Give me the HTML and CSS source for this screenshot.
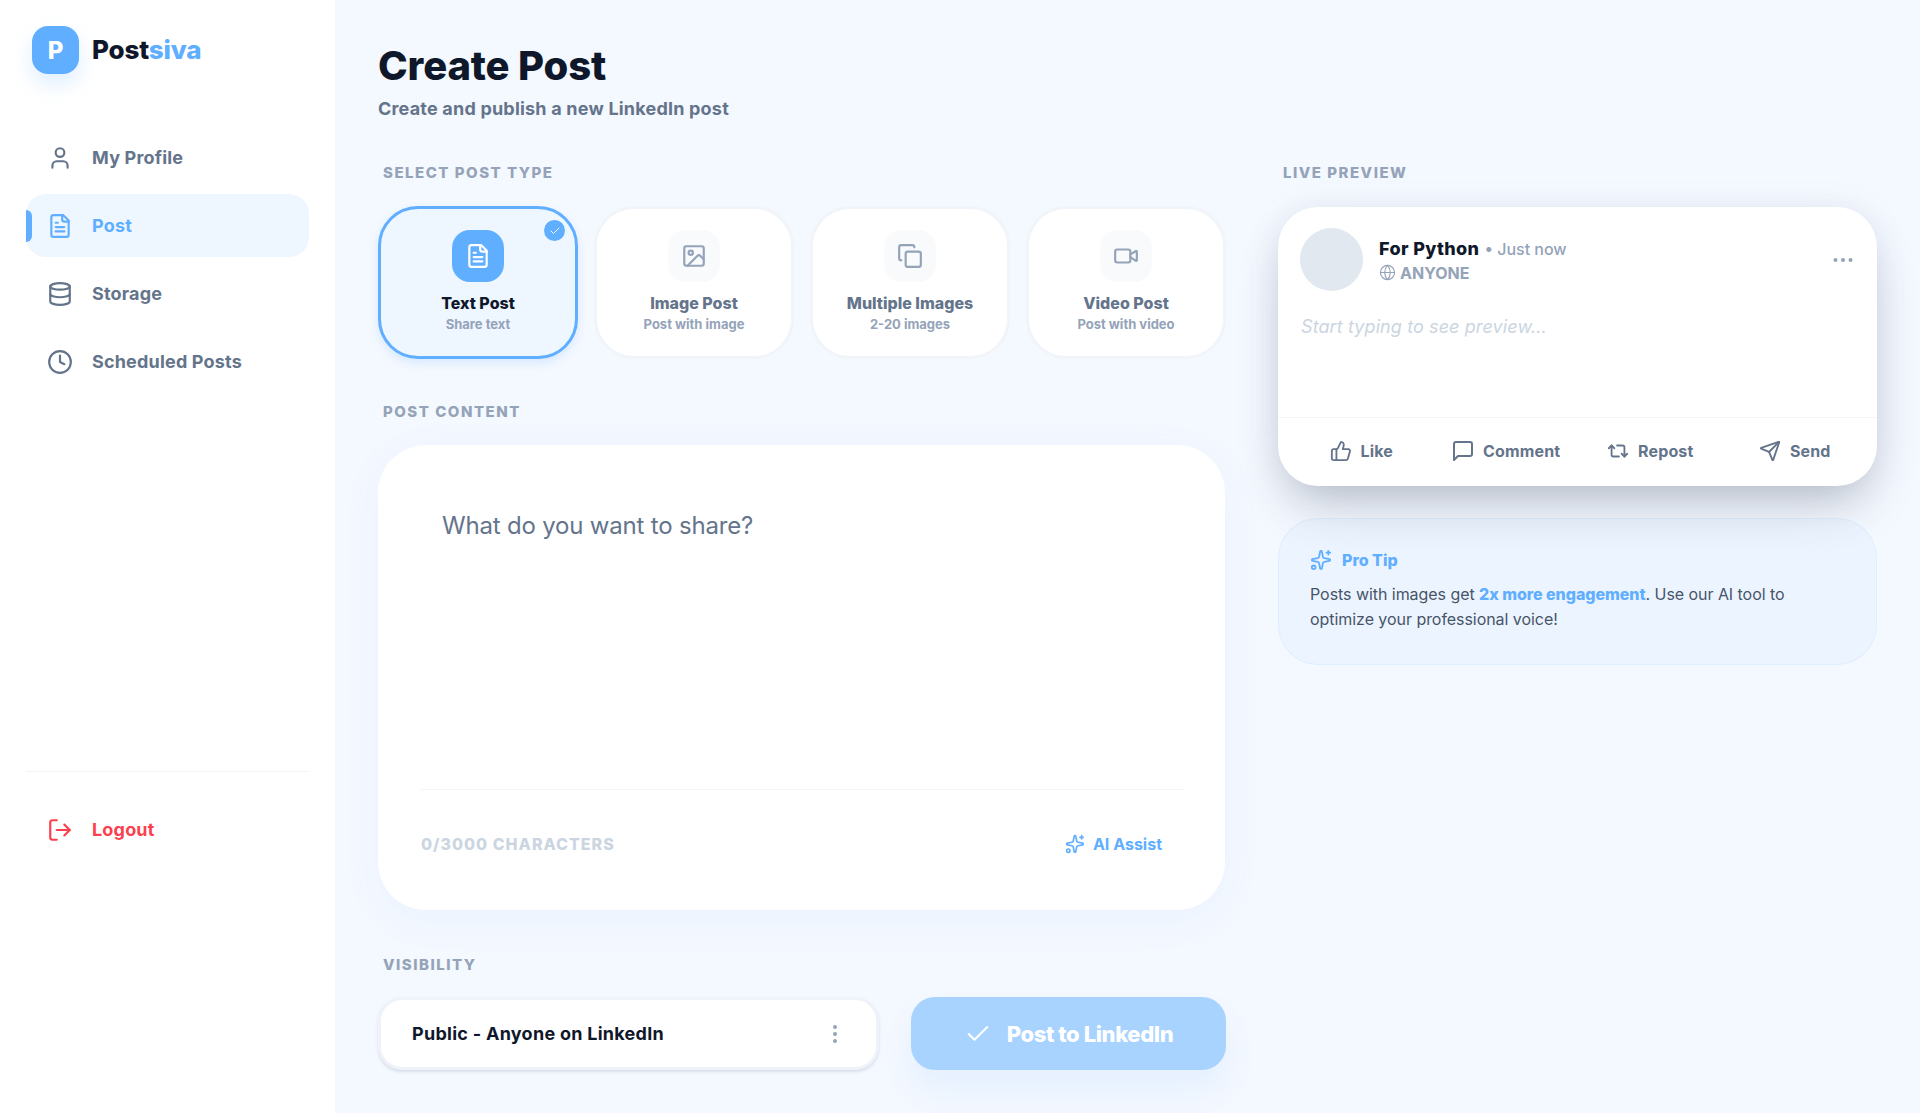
FILE: index.html
```html
<!DOCTYPE html>
<html lang="en">
<head>
  <meta charset="UTF-8" />
  <meta name="viewport" content="width=device-width, initial-scale=1.0"/>
  <title>Create Post - Postsiva</title>
  <link rel="stylesheet" href="styles.css">
</head>
<body>
  <!-- Icon set -->
  <svg class="icon-defs" aria-hidden="true">
    <symbol id="i-user" viewBox="0 0 24 24"><path d="M19 21v-2a4 4 0 0 0-4-4H9a4 4 0 0 0-4 4v2"/><circle cx="12" cy="7" r="4"/></symbol>
    <symbol id="i-file" viewBox="0 0 24 24"><path d="M15 2H6a2 2 0 0 0-2 2v16a2 2 0 0 0 2 2h12a2 2 0 0 0 2-2V7Z"/><path d="M14 2v4a2 2 0 0 0 2 2h4"/><path d="M10 9H8"/><path d="M16 13H8"/><path d="M16 17H8"/></symbol>
    <symbol id="i-database" viewBox="0 0 24 24"><ellipse cx="12" cy="5" rx="9" ry="3"/><path d="M3 5V19A9 3 0 0 0 21 19V5"/><path d="M3 12A9 3 0 0 0 21 12"/></symbol>
    <symbol id="i-clock" viewBox="0 0 24 24"><circle cx="12" cy="12" r="10"/><polyline points="12 6 12 12 16 14"/></symbol>
    <symbol id="i-logout" viewBox="0 0 24 24"><path d="M9 21H5a2 2 0 0 1-2-2V5a2 2 0 0 1 2-2h4"/><polyline points="16 17 21 12 16 7"/><line x1="21" y1="12" x2="9" y2="12"/></symbol>
    <symbol id="i-image" viewBox="0 0 24 24"><rect x="3" y="3" width="18" height="18" rx="2"/><circle cx="9" cy="9" r="2"/><path d="m21 15-3.086-3.086a2 2 0 0 0-2.828 0L6 21"/></symbol>
    <symbol id="i-copy" viewBox="0 0 24 24"><rect x="8" y="8" width="14" height="14" rx="2"/><path d="M4 16c-1.1 0-2-.9-2-2V4c0-1.1.9-2 2-2h10c1.1 0 2 .9 2 2"/></symbol>
    <symbol id="i-video" viewBox="0 0 24 24"><path d="m16 13 5.223 3.482a.5.5 0 0 0 .777-.416V7.87a.5.5 0 0 0-.752-.432L16 10.5"/><rect x="2" y="6" width="14" height="12" rx="2"/></symbol>
    <symbol id="i-check" viewBox="0 0 24 24"><path d="M20 6 9 17l-5-5"/></symbol>
    <symbol id="i-globe" viewBox="0 0 24 24"><circle cx="12" cy="12" r="10"/><path d="M12 2a14.5 14.5 0 0 0 0 20 14.5 14.5 0 0 0 0-20"/><path d="M2 12h20"/></symbol>
    <symbol id="i-like" viewBox="0 0 24 24"><path d="M7 10v12"/><path d="M15 5.88 14 10h5.83a2 2 0 0 1 1.92 2.56l-2.33 8A2 2 0 0 1 17.5 22H4a2 2 0 0 1-2-2v-8a2 2 0 0 1 2-2h2.76a2 2 0 0 0 1.79-1.11L12 2a3.13 3.13 0 0 1 3 3.88Z"/></symbol>
    <symbol id="i-comment" viewBox="0 0 24 24"><path d="M21 15a2 2 0 0 1-2 2H7l-4 4V5a2 2 0 0 1 2-2h14a2 2 0 0 1 2 2z"/></symbol>
    <symbol id="i-repost" viewBox="0 0 24 24"><path d="m2 9 3-3 3 3"/><path d="M13 18H7a2 2 0 0 1-2-2V6"/><path d="m22 15-3 3-3-3"/><path d="M11 6h6a2 2 0 0 1 2 2v10"/></symbol>
    <symbol id="i-send" viewBox="0 0 24 24"><path d="M14.536 21.686a.5.5 0 0 0 .937-.024l6.5-19a.496.496 0 0 0-.635-.635l-19 6.5a.5.5 0 0 0-.024.937l7.93 3.18a2 2 0 0 1 1.112 1.11z"/><path d="m21.854 2.147-10.94 10.939"/></symbol>
    <symbol id="i-sparkles" viewBox="0 0 24 24"><path d="M11.017 2.814a1 1 0 0 1 1.966 0l1.051 5.558a2 2 0 0 0 1.594 1.594l5.558 1.051a1 1 0 0 1 0 1.966l-5.558 1.051a2 2 0 0 0-1.594 1.594l-1.051 5.558a1 1 0 0 1-1.966 0l-1.051-5.558a2 2 0 0 0-1.594-1.594l-5.558-1.051a1 1 0 0 1 0-1.966l5.558-1.051a2 2 0 0 0 1.594-1.594z"/><path d="M20 2v4"/><path d="M22 4h-4"/><circle cx="4" cy="20" r="2"/></symbol>
  </svg>

  <div class="layout">
    <aside class="sidebar">
      <div class="brand">
        <div class="brand-mark">P</div>
        <div class="brand-name">Post<span>siva</span></div>
      </div>

      <nav class="nav">
        <a class="nav-item"><svg class="nav-icon"><use href="#i-user"/></svg>My Profile</a>
        <a class="nav-item active"><svg class="nav-icon"><use href="#i-file"/></svg>Post</a>
        <a class="nav-item"><svg class="nav-icon"><use href="#i-database"/></svg>Storage</a>
        <a class="nav-item"><svg class="nav-icon"><use href="#i-clock"/></svg>Scheduled Posts</a>
      </nav>

      <div class="sidebar-foot">
        <a class="nav-item logout"><svg class="nav-icon"><use href="#i-logout"/></svg>Logout</a>
      </div>
    </aside>

    <main class="main">
      <header class="page-head">
        <h1>Create Post</h1>
        <p>Create and publish a new LinkedIn post</p>
      </header>

      <div class="columns">
        <section class="editor">
          <h2 class="section-label">Select Post Type</h2>
          <div class="type-grid">
            <button class="type-card selected">
              <span class="check-badge"><svg><use href="#i-check"/></svg></span>
              <span class="type-icon"><svg><use href="#i-file"/></svg></span>
              <span class="type-title">Text Post</span>
              <span class="type-sub">Share text</span>
            </button>
            <button class="type-card">
              <span class="type-icon"><svg><use href="#i-image"/></svg></span>
              <span class="type-title">Image Post</span>
              <span class="type-sub">Post with image</span>
            </button>
            <button class="type-card">
              <span class="type-icon"><svg><use href="#i-copy"/></svg></span>
              <span class="type-title">Multiple Images</span>
              <span class="type-sub">2-20 images</span>
            </button>
            <button class="type-card">
              <span class="type-icon"><svg><use href="#i-video"/></svg></span>
              <span class="type-title">Video Post</span>
              <span class="type-sub">Post with video</span>
            </button>
          </div>

          <h2 class="section-label content-label">Post Content</h2>
          <div class="composer">
            <textarea class="composer-input" placeholder="What do you want to share?"></textarea>
            <div class="composer-foot">
              <span class="char-count">0/3000 Characters</span>
              <button class="ai-btn"><svg><use href="#i-sparkles"/></svg>AI Assist</button>
            </div>
          </div>

          <h2 class="section-label visibility-label">Visibility</h2>
          <div class="publish-row">
            <div class="visibility-select">
              <span>Public - Anyone on LinkedIn</span>
              <svg class="kebab" viewBox="0 0 6 20"><circle cx="3" cy="3" r="2"/><circle cx="3" cy="10" r="2"/><circle cx="3" cy="17" r="2"/></svg>
            </div>
            <button class="publish-btn" disabled><svg><use href="#i-check"/></svg>Post to LinkedIn</button>
          </div>
        </section>

        <section class="preview">
          <h2 class="section-label">Live Preview</h2>
          <div class="preview-card">
            <div class="preview-head">
              <div class="avatar"></div>
              <div class="author">
                <div class="author-line"><strong>For Python</strong><span>• Just now</span></div>
                <div class="audience"><svg><use href="#i-globe"/></svg>ANYONE</div>
              </div>
              <svg class="more" viewBox="0 0 20 4"><circle cx="2.5" cy="2" r="2"/><circle cx="10" cy="2" r="2"/><circle cx="17.5" cy="2" r="2"/></svg>
            </div>
            <p class="preview-body">Start typing to see preview...</p>
            <div class="preview-actions">
              <span class="action"><svg><use href="#i-like"/></svg>Like</span>
              <span class="action action-comment"><svg><use href="#i-comment"/></svg>Comment</span>
              <span class="action"><svg><use href="#i-repost"/></svg>Repost</span>
              <span class="action"><svg><use href="#i-send"/></svg>Send</span>
            </div>
          </div>

          <div class="tip">
            <div class="tip-title"><svg><use href="#i-sparkles"/></svg>Pro Tip</div>
            <p>Posts with images get <b>2x more engagement</b>. Use our AI tool to optimize your professional voice!</p>
          </div>
        </section>
      </div>
    </main>
  </div>
</body>
</html>
```

FILE: styles.css
```css
* {
  box-sizing: border-box;
}
body {
  margin: 0;
  font-family: Inter, "Noto Sans", sans-serif;
  color: #0f172a;
  background: #f4f8ff;
}
h1, h2, p {
  margin: 0;
}
button {
  font-family: inherit;
  cursor: pointer;
}
svg {
  fill: none;
  stroke: currentColor;
  stroke-width: 2;
  stroke-linecap: round;
  stroke-linejoin: round;
}
.icon-defs {
  display: none;
}
.layout {
  display: flex;
  height: 100vh;
  overflow: hidden;
}

/* Sidebar */
.sidebar {
  width: 335px;
  flex-shrink: 0;
  height: 100%;
  background: #fff;
  padding: 26px 26px 0;
  display: flex;
  flex-direction: column;
}
.brand {
  display: flex;
  align-items: center;
  gap: 13px;
  padding-left: 6px;
  margin-bottom: 52px;
}
.brand-mark {
  width: 47px;
  height: 48px;
  border-radius: 16px;
  background: #60aeff;
  color: #fff;
  font-size: 24px;
  font-weight: 800;
  display: flex;
  align-items: center;
  justify-content: center;
  box-shadow: 0 10px 20px rgba(96, 174, 255, 0.2);
}
.brand-name {
  padding-bottom: 2px;
  font-size: 26px;
  font-weight: 800;
  letter-spacing: -0.15px;
  color: #0f172a;
}
.brand-name span {
  color: #60aeff;
}
.nav {
  display: flex;
  flex-direction: column;
  gap: 5px;
}
.nav-item {
  position: relative;
  height: 63px;
  border-radius: 20px;
  padding-left: 21px;
  display: flex;
  align-items: center;
  gap: 19px;
  font-size: 18px;
  font-weight: 700;
  letter-spacing: 0.18px;
  color: #64748b;
}
.nav-icon {
  width: 26px;
  height: 26px;
  flex-shrink: 0;
}
.nav-item.active {
  background: #eef6ff;
  color: #60aeff;
}
.nav-item.active::before {
  content: "";
  position: absolute;
  left: 0;
  top: 16px;
  width: 6px;
  height: 32px;
  border-radius: 0 6px 6px 0;
  background: #60aeff;
}
.sidebar-foot {
  margin-top: 378px;
  padding-top: 26px;
  border-top: 1px solid #f1f5f9;
}
.logout {
  color: #fb3f4e;
}

/* Main */
.main {
  flex: 1;
  padding: 42px 42px 0 43px;
  min-width: 0;
}
.page-head h1 {
  font-size: 40px;
  line-height: 48px;
  font-weight: 800;
  letter-spacing: -0.15px;
  color: #0f172a;
}
.page-head p {
  margin-top: 5px;
  font-size: 18px;
  line-height: 28px;
  font-weight: 700;
  letter-spacing: 0.2px;
  color: #64748b;
}
.columns {
  display: grid;
  grid-template-columns: 848px 599px;
  gap: 52px;
  margin-top: 40px;
}
.section-label {
  padding-left: 5px;
  margin-bottom: 23px;
  font-size: 15px;
  line-height: 20px;
  font-weight: 800;
  letter-spacing: 1.5px;
  text-transform: uppercase;
  color: #94a3b8;
}
.content-label {
  margin-top: 43px;
  margin-bottom: 23px;
}
.visibility-label {
  margin-top: 45px;
  margin-bottom: 22px;
}

/* Post type cards */
.type-grid {
  display: grid;
  grid-template-columns: repeat(4, 1fr);
  gap: 16px;
}
.type-card {
  position: relative;
  height: 153px;
  padding: 21px 0 0;
  background: #fff;
  border: 3px solid #f1f5f9;
  border-radius: 40px;
  display: flex;
  flex-direction: column;
  align-items: center;
}
.type-card.selected {
  background: #eef6ff;
  border-color: #60aeff;
  box-shadow: 0 4px 8px rgba(96, 174, 255, 0.2);
}
.type-icon {
  width: 52px;
  height: 52px;
  border-radius: 18px;
  background: #f8fafc;
  color: #94a3b8;
  display: flex;
  align-items: center;
  justify-content: center;
}
.type-icon svg {
  width: 26px;
  height: 26px;
}
.selected .type-icon {
  background: #60aeff;
  color: #fff;
}
.type-title {
  margin-top: 11px;
  font-size: 16px;
  line-height: 20px;
  font-weight: 800;
  color: #64748b;
}
.selected .type-title {
  color: #0f172a;
}
.type-sub {
  margin-top: 2px;
  font-size: 13px;
  line-height: 18px;
  font-weight: 700;
  color: #94a3b8;
}
.check-badge {
  position: absolute;
  top: 11px;
  right: 10px;
  width: 21px;
  height: 21px;
  border-radius: 50%;
  background: #60aeff;
  color: #fff;
  display: flex;
  align-items: center;
  justify-content: center;
}
.check-badge svg {
  width: 12px;
  height: 12px;
}

/* Composer */
.composer {
  width: 847px;
  height: 465px;
  background: #fff;
  border-radius: 48px;
  padding: 63px 40px 0 43px;
  box-shadow: 0 10px 40px rgba(96, 174, 255, 0.06);
  display: flex;
  flex-direction: column;
}
.composer-input {
  flex: none;
  height: 281px;
  padding: 0 21px;
  border: none;
  outline: none;
  resize: none;
  background: transparent;
  font-family: inherit;
  font-size: 24px;
  line-height: 36px;
  letter-spacing: -0.19px;
  color: #0f172a;
}
.composer-input::placeholder {
  color: #64748b;
  opacity: 1;
}
.composer-foot {
  border-top: 1px solid #f1f5f9;
  padding: 43px 23px 0 0;
  display: flex;
  justify-content: space-between;
  align-items: center;
}
.char-count {
  font-size: 16px;
  line-height: 22px;
  font-weight: 800;
  letter-spacing: 1px;
  text-transform: uppercase;
  color: #cbd5e1;
}
.ai-btn {
  padding: 0;
  border: none;
  background: none;
  display: flex;
  align-items: center;
  gap: 8px;
  font-size: 16px;
  font-weight: 700;
  color: #60aeff;
}
.ai-btn svg {
  width: 20px;
  height: 20px;
}

/* Visibility + publish */
.publish-row {
  display: grid;
  grid-template-columns: 501px 1fr;
  gap: 32px;
}
.visibility-select {
  height: 73px;
  background: #fff;
  border: 3px solid #eff3f9;
  border-radius: 24px;
  box-shadow: 0 2px 3px rgba(148, 163, 184, 0.3);
  padding: 0 38px 0 31px;
  display: flex;
  align-items: center;
  justify-content: space-between;
  font-size: 18px;
  font-weight: 700;
  letter-spacing: 0.27px;
  color: #0f172a;
}
.kebab {
  width: 6px;
  height: 20px;
  fill: #94a3b8;
  stroke: none;
}
.publish-btn {
  height: 73px;
  border: none;
  border-radius: 24px;
  background: #a9d3ff;
  color: #fff;
  font-size: 22px;
  font-weight: 800;
  letter-spacing: -0.4px;
  display: flex;
  align-items: center;
  justify-content: center;
  gap: 15px;
  box-shadow: 0 20px 30px rgba(96, 174, 255, 0.1);
}
.publish-btn svg {
  width: 28px;
  height: 28px;
  stroke-width: 1.8;
}

/* Live preview */
.preview .section-label {
  margin-bottom: 24px;
}
.preview-card {
  height: 279px;
  background: #fff;
  border-radius: 40px;
  box-shadow: 0 25px 50px -12px rgba(51, 65, 85, 0.33), 0 0 30px rgba(148, 163, 184, 0.12);
  display: flex;
  flex-direction: column;
}
.preview-head {
  padding: 21px 24px 0 22px;
  display: flex;
  align-items: center;
  gap: 16px;
}
.avatar {
  width: 63px;
  height: 63px;
  border-radius: 50%;
  background: #e2e8f0;
  flex-shrink: 0;
}
.author {
  flex: 1;
  padding-top: 2px;
}
.author-line {
  display: flex;
  align-items: center;
  gap: 5px;
  font-size: 16px;
  line-height: 24px;
  font-weight: 500;
  color: #94a3b8;
}
.author-line strong {
  font-size: 18px;
  font-weight: 800;
  letter-spacing: 0.35px;
  color: #0f172a;
}
.audience {
  display: flex;
  align-items: center;
  gap: 4px;
  font-size: 16px;
  line-height: 24px;
  font-weight: 700;
  color: #94a3b8;
}
.audience svg {
  width: 17px;
  height: 17px;
  stroke-width: 1.6;
}
.more {
  width: 20px;
  height: 4px;
  fill: #94a3b8;
  stroke: none;
}
.preview-body {
  padding: 23px 23px 0;
  flex: 1;
  font-size: 18px;
  line-height: 26px;
  font-style: italic;
  letter-spacing: 0.1px;
  color: #cbd5e1;
}
.preview-actions {
  height: 69px;
  padding: 0 10px 2px 11px;
  border-top: 1px solid #f1f5f9;
  display: grid;
  grid-template-columns: repeat(4, 1fr);
}
.action {
  display: flex;
  align-items: center;
  justify-content: center;
  gap: 9px;
  font-size: 16px;
  font-weight: 700;
  letter-spacing: 0.15px;
  color: #64748b;
}
.action svg {
  width: 22px;
  height: 22px;
}
.action-comment {
  gap: 8px;
}
.action-comment svg {
  width: 24px;
  height: 24px;
}
.tip {
  position: relative;
  margin-top: 32px;
  height: 147px;
  padding: 30px 30px 0 31px;
  border: 1px solid rgba(96, 174, 255, 0.1);
  border-radius: 40px;
  background: rgba(96, 174, 255, 0.05);
}
.tip-title {
  display: flex;
  align-items: center;
  gap: 10px;
  font-size: 16px;
  line-height: 22px;
  font-weight: 800;
  color: #60aeff;
}
.tip-title svg {
  width: 22px;
  height: 22px;
}
.tip p {
  margin-top: 11px;
  font-size: 16px;
  line-height: 25px;
  letter-spacing: -0.05px;
  color: #475569;
}
.tip b {
  font-weight: 800;
  color: #60aeff;
}
```
